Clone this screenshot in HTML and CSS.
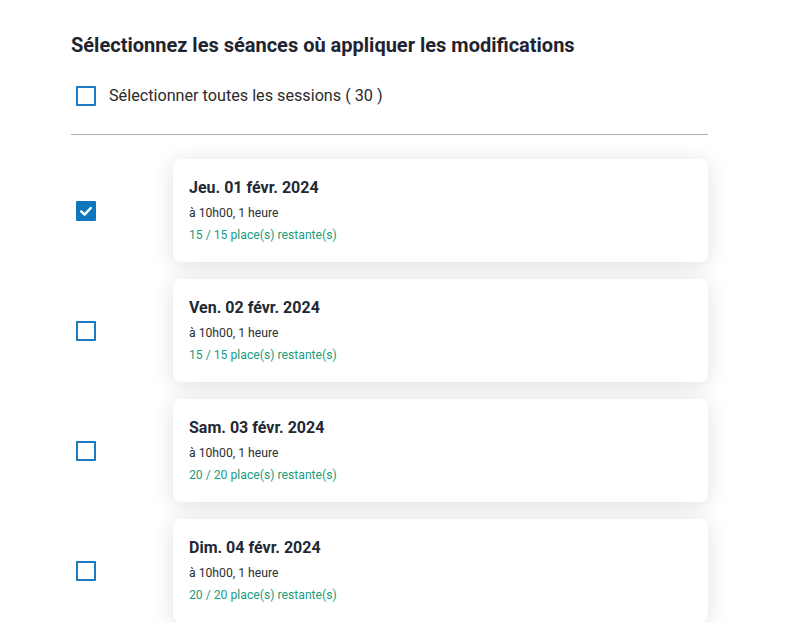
FILE: index.html
```html
<!DOCTYPE html>
<html lang="fr">
<head>
<meta charset="utf-8">
<title>Séances</title>
<link rel="stylesheet" href="styles.css">
</head>
<body>
<main class="panel">
  <h2 class="heading">Sélectionnez les séances où appliquer les modifications</h2>
  <label class="select-all">
    <span class="box"></span>
    <span class="select-all-text">Sélectionner toutes les sessions ( 30 )</span>
  </label>
  <hr class="divider">
  <ul class="sessions">
    <li class="session">
      <span class="check-cell"><span class="box checked"><svg viewBox="0 0 20 20" width="20" height="20"><path d="M5.2 10.4 L8.6 13.6 L14.8 7" fill="none" stroke="#fff" stroke-width="2.4" stroke-linecap="round" stroke-linejoin="round"/></svg></span></span>
      <div class="card">
        <div class="card-title">Jeu. 01 févr. 2024</div>
        <div class="card-time">à 10h00, 1 heure</div>
        <div class="card-places">15 / 15 place(s) restante(s)</div>
      </div>
    </li>
    <li class="session">
      <span class="check-cell"><span class="box"></span></span>
      <div class="card">
        <div class="card-title">Ven. 02 févr. 2024</div>
        <div class="card-time">à 10h00, 1 heure</div>
        <div class="card-places">15 / 15 place(s) restante(s)</div>
      </div>
    </li>
    <li class="session">
      <span class="check-cell"><span class="box"></span></span>
      <div class="card">
        <div class="card-title">Sam. 03 févr. 2024</div>
        <div class="card-time">à 10h00, 1 heure</div>
        <div class="card-places">20 / 20 place(s) restante(s)</div>
      </div>
    </li>
    <li class="session">
      <span class="check-cell"><span class="box"></span></span>
      <div class="card">
        <div class="card-title">Dim. 04 févr. 2024</div>
        <div class="card-time">à 10h00, 1 heure</div>
        <div class="card-places">20 / 20 place(s) restante(s)</div>
      </div>
    </li>
  </ul>
</main>
</body>
</html>
```
FILE: styles.css
```css
html, body {
  margin: 0;
  padding: 0;
  background: #ffffff;
}
body {
  font-family: Roboto, "Liberation Sans", Arial, sans-serif;
  color: #222;
}
.panel {
  width: 637px;
  padding: 33px 0 0 71px;
}
.heading {
  margin: 0;
  font-size: 20px;
  line-height: 24px;
  font-weight: 700;
  color: #1f2430;
}
.select-all {
  display: flex;
  align-items: center;
  margin-top: 29px;
  height: 20px;
  padding-left: 5px;
}
.select-all-text {
  margin-left: 13px;
  font-size: 16.2px;
  line-height: 20px;
  color: #2b2b2b;
}
.box {
  box-sizing: border-box;
  width: 20px;
  height: 20px;
  border: 2px solid #1a7dc4;
  border-radius: 1px;
  display: inline-flex;
  align-items: center;
  justify-content: center;
  background: #fff;
  flex: none;
}
.box.checked {
  background: #0f76bd;
  border-color: #0f76bd;
}
.box svg {
  display: block;
  flex: none;
}
.divider {
  margin: 28px 0 0;
  border: 0;
  height: 1px;
  background: #aeaeb8;
}
.sessions {
  list-style: none;
  margin: 24px 0 0;
  padding: 0;
  display: flex;
  flex-direction: column;
  gap: 17px;
}
.session {
  display: flex;
  align-items: center;
}
.check-cell {
  width: 102px;
  padding-left: 5px;
  box-sizing: border-box;
  display: flex;
  flex: none;
}
.card {
  flex: 1;
  box-sizing: border-box;
  height: 103px;
  padding: 19px 16px 0;
  background: #fff;
  border-radius: 8px;
  box-shadow: 0 3px 22px rgba(0, 0, 0, 0.13);
}
.card-title {
  font-size: 16px;
  line-height: 20px;
  font-weight: 700;
  color: #222834;
}
.card-time {
  margin-top: 6px;
  font-size: 12.2px;
  line-height: 18px;
  color: #2e2e36;
}
.card-places {
  margin-top: 4px;
  font-size: 12.2px;
  line-height: 18px;
  color: #1c9c80;
}
```
